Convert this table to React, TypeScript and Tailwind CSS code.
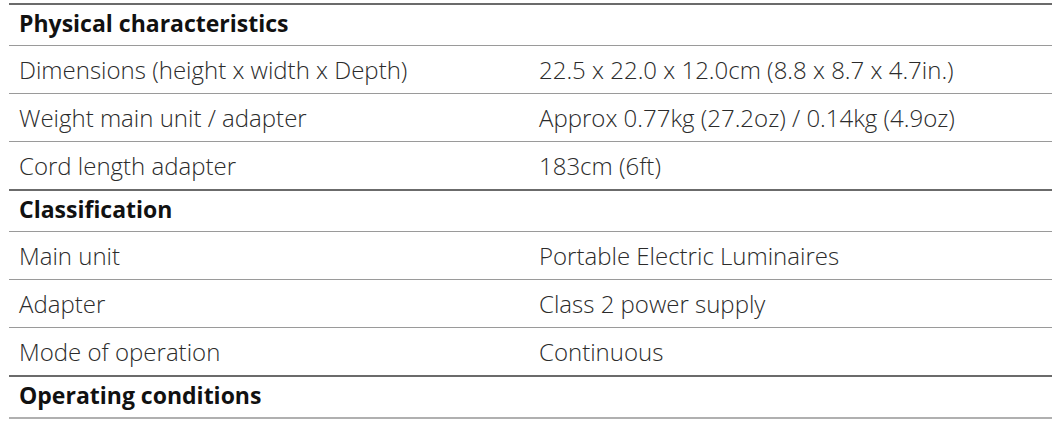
const sections = [
  {
    title: "Physical characteristics",
    rows: [
      ["Dimensions (height x width x Depth)", "22.5 x 22.0 x 12.0cm (8.8 x 8.7 x 4.7in.)"],
      ["Weight main unit / adapter", "Approx 0.77kg (27.2oz) / 0.14kg (4.9oz)"],
      ["Cord length adapter", "183cm (6ft)"],
    ],
  },
  {
    title: "Classification",
    rows: [
      ["Main unit", "Portable Electric Luminaires"],
      ["Adapter", "Class 2 power supply"],
      ["Mode of operation", "Continuous"],
    ],
  },
  {
    title: "Operating conditions",
    rows: [],
  },
];

export default function App() {
  return (
    <div
      className="w-[1060px] h-[425px] bg-white pt-[3px] px-[9px] overflow-hidden"
      style={{ fontFamily: "'Open Sans', 'Noto Sans', sans-serif" }}
    >
      <div className="w-[1043px] border-b-2 border-[#b0b0b0]">
        {sections.map((s) => (
          <div key={s.title}>
            <div className="h-[42px] border-t-2 border-[#6b6b6b] flex items-center pl-[10px] pb-[4px] text-[23px] font-bold text-[#111]">
              {s.title}
            </div>
            {s.rows.map(([k, v]) => (
              <div
                key={k}
                className="h-[48px] border-t border-[#9a9a9a] grid grid-cols-[520px_1fr] items-center text-[24px] font-light text-[#2b2b2b]"
              >
                <div className="pl-[10px]">{k}</div>
                <div className="pl-[10px]">{v}</div>
              </div>
            ))}
          </div>
        ))}
      </div>
    </div>
  );
}
